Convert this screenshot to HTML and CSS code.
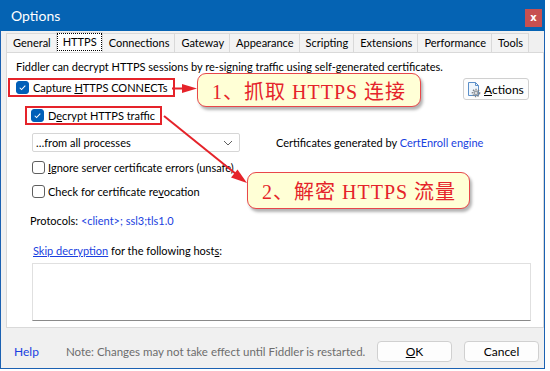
FILE: index.html
```html
<!DOCTYPE html>
<html lang="en">
<head>
  <meta charset="UTF-8" />
  <title>Options</title>
  <link rel="stylesheet" href="styles.css">
</head>
<body>
  <div class="window">
    <!-- barra de titulo -->
    <div class="titlebar">
      <span class="title">Options</span>
      <span class="close">x</span>
    </div>

    <div class="tabs">
      <span class="tab">General</span>
      <span class="tab active">HTTPS</span>
      <span class="tab">Connections</span>
      <span class="tab">Gateway</span>
      <span class="tab">Appearance</span>
      <span class="tab">Scripting</span>
      <span class="tab">Extensions</span>
      <span class="tab">Performance</span>
      <span class="tab">Tools</span>
    </div>

    <div class="panel">
      <p class="intro">Fiddler can decrypt HTTPS sessions by re-signing traffic using self-generated certificates.</p>

      <div class="row">
        <label class="check mark first"><span class="box on"><svg viewBox="0 0 13 13"><polyline points="3.2,6.8 5.4,9 9.8,4.4"/></svg></span><span>Capture <u>H</u>TTPS CONNECTs</span></label>
        <button class="actions">
          <svg width="17" height="17" viewBox="0 0 17 17">
            <path d="M2.5 1.5h7l3 3v10h-10z" fill="#eef5fc" stroke="#5b8fc9"/>
            <path d="M9.5 1.5v3h3" fill="none" stroke="#5b8fc9"/>
            <circle cx="10" cy="12" r="3.4" fill="none" stroke="#7d8288" stroke-width="1.8" stroke-dasharray="1.3 1.2"/>
            <circle cx="10" cy="12" r="2.4" fill="#9aa0a6"/>
            <circle cx="10" cy="12" r="1" fill="#f2f2f2"/>
          </svg><span><u>A</u>ctions</span>
        </button>
      </div>

      <label class="check mark sub"><span class="box on"><svg viewBox="0 0 13 13"><polyline points="3.2,6.8 5.4,9 9.8,4.4"/></svg></span><span>D<u>e</u>crypt HTTPS traffic</span></label>

      <div class="select-row">
        <div class="select"><span>…from all processes</span>
          <svg width="10" height="6" viewBox="0 0 10 6"><polyline points="1,1 5,5 9,1"/></svg>
        </div>
        <span class="certs">Certificates generated by <a class="link">CertEnroll engine</a></span>
      </div>

      <label class="check opt"><span class="box"></span><span><u>I</u>gnore server certificate errors (unsafe)</span></label>
      <label class="check opt"><span class="box"></span><span>Check for certificate re<u>v</u>ocation</span></label>

      <p class="protocols">Protocols: <span class="link">&lt;client&gt;; ssl3;tls1.0</span></p>
      <p class="skip"><a class="link under">Skip decryption</a> for the following host<u>s</u>:</p>
      <div class="hosts"></div>
    </div>

    <div class="footer">
      <a class="help">Help</a>
      <span class="note">Note: Changes may not take effect until Fiddler is restarted.</span>
      <button class="btn ok"><u>O</u>K</button>
      <button class="btn">Cancel</button>
    </div>
  </div>

  <!-- anotacoes -->
  <div class="callout one">1、抓取 HTTPS 连接</div>
  <div class="callout two">2、解密 HTTPS 流量</div>

  <svg class="arrows" width="550" height="371" viewBox="0 0 550 371">
    <line x1="172" y1="88.5" x2="184" y2="88.5"/>
    <polygon points="182,84 197,88.5 182,93"/>
    <line x1="164" y1="116" x2="236" y2="174"/>
    <polygon points="247,183 231,177.5 237.5,169.5"/>
  </svg>
</body>
</html>
```

FILE: styles.css
```css
:root {
  --title-blue: #0563b3;
  --border-blue: #1b61b2;
  --face: #f0f0f0;
  --line: #d9d9d9;
  --mark-red: #e5232a;
  --link: #1a3fe0;
}

* { box-sizing: border-box; margin: 0; padding: 0; }

body {
  width: 550px;
  height: 371px;
  position: relative;
  overflow: hidden;
  background: #fff;
  font-family: Lato, "Open Sans", sans-serif;
  font-size: 11px;
  color: #000;
}

u { text-decoration: underline; text-underline-offset: 1px; }

.window {
  width: 545px;
  height: 369px;
  display: flex;
  flex-direction: column;
  background: var(--face);
  border: 1px solid var(--border-blue);
  border-top: none;
}

/* === BARRA DE TITULO === */
.titlebar {
  height: 31px;
  margin: 0 -1px;
  display: flex;
  justify-content: space-between;
  align-items: flex-start;
  padding: 0 3px 0 11px;
  background: var(--title-blue);
  color: #fff;
}
.titlebar .title {
  font-size: 14px;
  line-height: 31px;
}
.titlebar .close {
  width: 17px;
  height: 18px;
  margin-top: 9px;
  background: #c75050;
  font-family: "DejaVu Sans", sans-serif;
  font-size: 10px;
  font-weight: bold;
  line-height: 17px;
  text-align: center;
}

/* === ABAS === */
.tabs {
  height: 21px;
  display: flex;
  align-items: flex-end;
  padding-left: 5px;
}
.tab {
  height: 19px;
  padding: 0 5px 0 6px;
  line-height: 18px;
  border: 1px solid var(--line);
  border-bottom: none;
  margin-right: -1px;
  background: #f3f3f3;
}
.tab.active {
  height: 20px;
  background: #fff;
  outline: 1px dotted #000;
  outline-offset: -2px;
  position: relative;
  z-index: 1;
}

/* === PAINEL === */
.panel {
  height: 276px;
  margin-left: 5px;
  background: #fff;
  border: 1px solid var(--line);
}
.intro {
  margin: 6px 0 0 9px;
  line-height: 16px;
}
.row {
  display: flex;
  justify-content: space-between;
  align-items: flex-start;
  margin-top: 3px;
}
.check {
  display: flex;
  align-items: center;
  white-space: nowrap;
}
.box {
  width: 13px;
  height: 13px;
  margin-right: 4px;
  border: 1px solid #5f5f5f;
  border-radius: 3px;
  background: #fff;
  flex: none;
}
.box.on {
  background: #005fb8;
  border-color: #005fb8;
}
.box svg {
  display: block;
  width: 11px;
  height: 11px;
  fill: none;
  stroke: #fff;
  stroke-width: 1.2;
}
.mark {
  height: 19px;
  border: 2px solid var(--mark-red);
  padding: 0 5px 0 6px;
}
.mark.first { margin-left: 1px; }
.mark.sub {
  display: inline-flex;
  margin: 6px 0 0 18px;
  padding-left: 4px;
}

.actions {
  width: 66px;
  height: 22px;
  margin-right: 14px;
  display: flex;
  align-items: center;
  gap: 1px;
  padding-left: 2px;
  border: 1px solid #d0d0d0;
  border-radius: 3px;
  background: #fdfdfd;
  font: inherit;
  font-size: 12px;
}

.select-row {
  display: flex;
  align-items: center;
  margin: 8px 0 0 25px;
}
.select {
  width: 208px;
  height: 19px;
  display: flex;
  justify-content: space-between;
  align-items: center;
  padding: 0 6px 0 3px;
  border: 1px solid #d6d6d6;
  border-radius: 2px;
}
.select svg {
  fill: none;
  stroke: #606060;
  stroke-width: 1;
}
.certs { margin-left: 36px; }

.link { color: var(--link); }
.link.under { text-decoration: underline; }

.opt {
  height: 16px;
  margin: 7px 0 0 25px;
}
.opt + .opt { margin-top: 8px; }
.opt .box { margin-right: 3px; }

.protocols {
  margin: 14px 0 0 23px;
  line-height: 16px;
}
.skip {
  margin: 14px 0 0 26px;
  line-height: 16px;
}
.hosts {
  height: 58px;
  margin: 4px 12px 0 25px;
  border: 1px solid #e0e0e0;
  border-bottom-color: #8a8a8a;
}

/* === RODAPE === */
.footer {
  height: 40px;
  display: flex;
  align-items: center;
  padding: 7px 5px 0 13px;
  white-space: nowrap;
}
.help { color: var(--link); font-size: 12px; }
.note {
  margin-left: 27px;
  color: #6d6d6d;
  font-size: 11.5px;
}
.btn {
  width: 75px;
  height: 21px;
  border: 1px solid #d0d0d0;
  border-radius: 4px;
  background: #fdfdfd;
  font: inherit;
  font-size: 12px;
}
.btn.ok { margin-left: auto; margin-right: 12px; }

/* === ANOTACOES === */
.callout {
  position: absolute;
  display: flex;
  align-items: center;
  padding-left: 14px;
  border: 1px solid #e8474a;
  border-radius: 9px;
  background: #ffffd6;
  box-shadow: 2px 3px 3px rgba(0,0,0,0.3);
  color: var(--mark-red);
  font-family: "Liberation Serif", "Noto Sans CJK SC", serif;
  font-size: 20px;
  letter-spacing: 1px;
  white-space: pre;
}
.callout.one { left: 197px; top: 73px; width: 224px; height: 34px; }
.callout.two { left: 247px; top: 172px; width: 223px; height: 37px; }

.arrows {
  position: absolute;
  left: 0;
  top: 0;
  pointer-events: none;
}
.arrows line { stroke: var(--mark-red); stroke-width: 2; }
.arrows polygon { fill: var(--mark-red); }
```
